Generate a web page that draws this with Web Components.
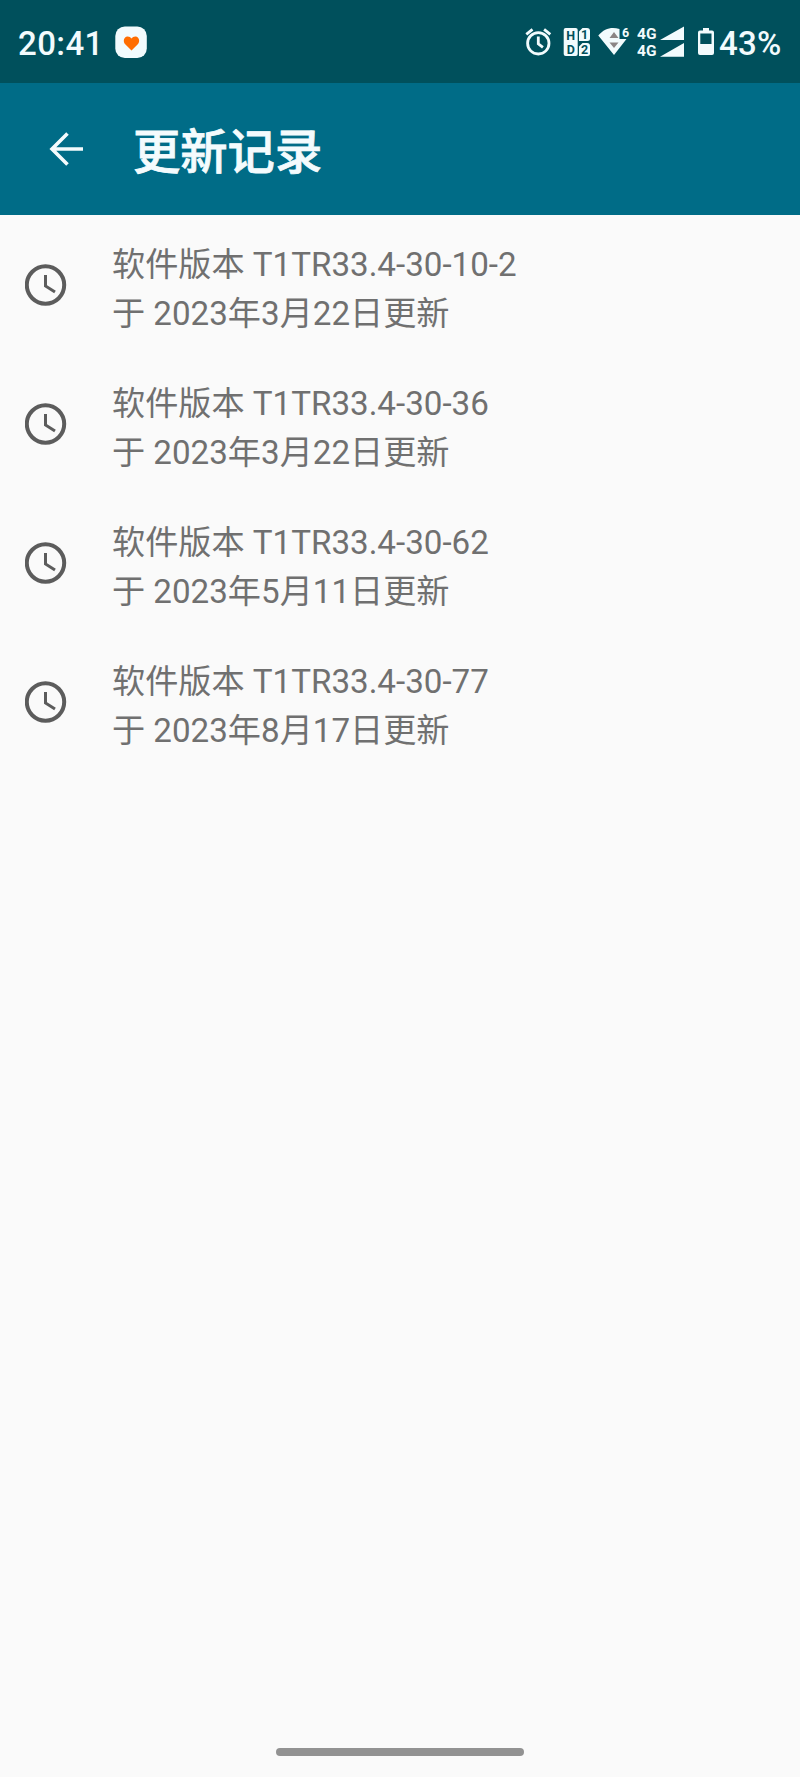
<!DOCTYPE html>
<html lang="zh-CN">
<head>
<meta charset="utf-8">
<meta name="viewport" content="width=device-width">
<title>更新记录</title>
<style>
  body { margin: 0; background: #fafafa; font-family: Roboto, "Noto Sans CJK SC", sans-serif; }
</style>
</head>
<body>
<update-screen>
  <status-bar slot="status" time="20:41" battery="43%"></status-bar>
  <app-bar slot="bar">更新记录</app-bar>
  <update-item version="T1TR33.4-30-10-2" date="2023年3月22日"></update-item>
  <update-item version="T1TR33.4-30-36" date="2023年3月22日"></update-item>
  <update-item version="T1TR33.4-30-62" date="2023年5月11日"></update-item>
  <update-item version="T1TR33.4-30-77" date="2023年8月17日"></update-item>
</update-screen>
<script>
(function() {
  'use strict';

  customElements.define('update-screen', class extends HTMLElement {
    constructor() {
      super();
      this.attachShadow({mode: 'open'}).innerHTML = `
      <style>
      :host { display: flex; flex-direction: column; height: 1777px; overflow: hidden; }
      main { flex: 1; }
      .home { width: 248px; height: 8px; margin: 0 auto 21px; border-radius: 4px; background: #929292; }
      </style>
      <slot name="status"></slot>
      <slot name="bar"></slot>
      <main><slot></slot></main>
      <div class="home"></div>
      `;
    }
  });

  // icon viewBoxes share the bar's own coordinates, 83px tall
  customElements.define('status-bar', class extends HTMLElement {
    constructor() {
      super();
      this.attachShadow({mode: 'open'});
    }
    connectedCallback() {
      this.shadowRoot.innerHTML = `
      <style>
      :host { display: flex; align-items: center; box-sizing: border-box; height: 83px; padding: 0 18px 0 18px; background: #00505c; color: #f2fbfd; font-size: 33px; font-weight: 500; }
      svg { display: block; height: 83px; fill: currentColor; }
      span { line-height: 39px; padding-top: 4px; }
      .time { width: 97px; letter-spacing: .4px; }
      .battery { width: 63px; padding-left: 1px; letter-spacing: .2px; }
      .icons { display: flex; margin-left: auto; }
      text { font-family: Roboto, sans-serif; font-weight: 700; }
      .dark { fill: #00505c; }
      </style>
      <span class="time">${this.getAttribute('time')}</span>
      <svg width="32" viewBox="115 0 32 83">
        <rect x="115.300" y="26.500" width="31.500" height="31.500" rx="9.500"/>
        <path fill="#ff6d00" d="M131.500 50.500l-6.300-6.200c-2.500-2.700-1.500-7.500 2.200-7.800 1.900-.1 3.100.8 4.100 1.900 1-1.100 2.200-2 4.100-1.900 3.700.3 4.700 5.100 2.200 7.800z"/>
      </svg>
      <div class="icons">
        <svg width="38" viewBox="525 0 38 83">
          <g fill="none" stroke="currentColor" stroke-width="2.800">
            <circle cx="538.300" cy="43.300" r="10.700"/>
            <path d="M538.300 36.500v7.300l4.600 3.600M526.300 34.300l6.200-5M550.300 34.300l-6.200-5"/>
          </g>
        </svg>
        <svg width="35" viewBox="563 0 35 83">
          <rect x="563.700" y="28" width="14" height="28" rx="2"/>
          <path d="M582.500 28h4.500a3 3 0 0 1 3 3v7.500a2.500 2.500 0 0 1-2.500 2.500h-8.500v-9.500zM582.500 43h4.500a3 3 0 0 1 3 3v7.500a2.500 2.500 0 0 1-2.500 2.500h-8.500v-9.500z"/>
          <g class="dark" font-size="12.500" text-anchor="middle">
            <text x="570.700" y="39.500">H</text>
            <text x="570.700" y="53.500">D</text>
            <text x="584.500" y="39">1</text>
            <text x="584.500" y="54">2</text>
          </g>
        </svg>
        <svg width="39" viewBox="598 0 39 83">
          <path d="M598.300 35.500C604.500 28 612 26.500 619.500 29v10h7l-12.500 16z"/>
          <path fill="#8b8585" d="M614 32l4.500 6h-9zM609.500 42.500h9l-4.500 5.500z"/>
          <text x="622" y="37.300" font-size="12.500">6</text>
        </svg>
        <svg width="61" viewBox="637 0 61 83">
          <text x="637" y="39" font-size="15.500">4G</text>
          <text x="637" y="55.500" font-size="15.500">4G</text>
          <path d="M684 26.500V40h-24zM684 43v13.700h-24z"/>
        </svg>
        <svg width="20" viewBox="698 0 20 83">
          <path fill-rule="evenodd" d="M703 28h6v2.500h3a2 2 0 0 1 2 2V53a2 2 0 0 1-2 2h-12a2 2 0 0 1-2-2V32.500a2 2 0 0 1 2-2h3zM700.300 33.500V44h11.200V33.500z"/>
        </svg>
      </div>
      <span class="battery">${this.getAttribute('battery')}</span>
      `;
    }
  });

  customElements.define('app-bar', class extends HTMLElement {
    constructor() {
      super();
      this.attachShadow({mode: 'open'}).innerHTML = `
      <style>
      :host { display: flex; align-items: center; box-sizing: border-box; height: 132px; padding: 0 49px; background: #006c87; color: #f4fbfd; }
      svg { display: block; margin-right: 49px; }
      h1 { margin: 0; font-size: 47.300px; line-height: 60px; font-weight: 500; -webkit-text-stroke: .8px; padding-top: 7px; }
      </style>
      <svg width="35" height="34" fill="none" stroke="currentColor" stroke-width="3.600"><path d="M34 17H3M18.500 1.500L3 17l15.500 15.500"/></svg>
      <h1><slot></slot></h1>
      `;
    }
  });

  customElements.define('update-item', class extends HTMLElement {
    constructor() {
      super();
      this.attachShadow({mode: 'open'});
    }
    connectedCallback() {
      this.shadowRoot.innerHTML = `
      <style>
      :host { display: flex; align-items: center; height: 139.200px; color: #707070; font-size: 33.150px; line-height: 49px; }
      svg { display: block; flex: none; margin: 0 45px 0 25px; }
      div { padding-top: 8px; }
      p { margin: 0; white-space: nowrap; }
      </style>
      <svg width="42" height="42" fill="none" stroke="#5c5c5c">
        <circle cx="20.500" cy="21" r="18.700" stroke-width="4"/>
        <path d="M20.500 11v11l9.500 6" stroke-width="3"/>
      </svg>
      <div>
        <p>软件版本 ${this.getAttribute('version')}</p>
        <p>于 ${this.getAttribute('date')}更新</p>
      </div>
      `;
    }
  });
}());
</script>
</body>
</html>
